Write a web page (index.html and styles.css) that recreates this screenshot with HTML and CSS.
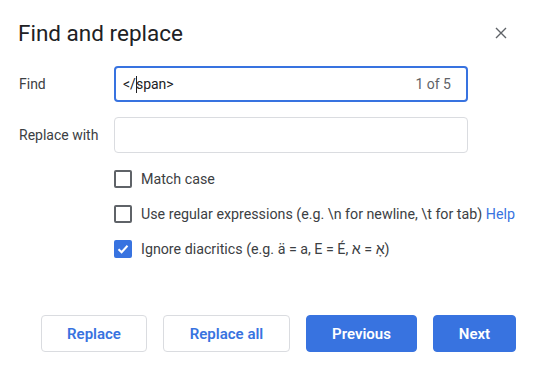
FILE: index.html
```html
<!DOCTYPE html>
<html lang="en">
<head>
    <meta charset="UTF-8">
    <meta name="viewport" content="width=device-width, initial-scale=1.0">
    <title>Find and replace</title>
    <link rel="stylesheet" href="styles.css">
</head>
<body>
    <div class="dialog">
        <div class="dialog-header">
            <h1>Find and replace</h1>
            <button class="close-btn" aria-label="Close">
                <svg width="12" height="12" viewBox="0 0 12 12">
                    <path d="M1 1 L11 11 M11 1 L1 11" stroke="#5f6368" stroke-width="1.4" fill="none"/>
                </svg>
            </button>
        </div>

        <div class="form-grid">
            <label class="field-label">Find</label>
            <div class="text-field focused">
                <span class="field-value">&lt;/<span class="caret"></span>span&gt;</span>
                <span class="match-count">1 of 5</span>
            </div>

            <label class="field-label">Replace with</label>
            <div class="text-field"></div>
        </div>

        <div class="options">
            <label class="option">
                <span class="checkbox"></span>
                <span>Match case</span>
            </label>
            <label class="option">
                <span class="checkbox"></span>
                <span>Use regular expressions (e.g. \n for newline, \t for tab) <a class="help-link" href="#">Help</a></span>
            </label>
            <label class="option">
                <span class="checkbox checked">
                    <svg width="14" height="14" viewBox="0 0 14 14">
                        <path d="M2.5 7.2 L5.6 10.2 L11.5 3.8" stroke="#fff" stroke-width="2" fill="none"/>
                    </svg>
                </span>
                <span>Ignore diacritics (e.g. ä = a, E = É, <bdi>א</bdi> = <bdi>אָ</bdi>)</span>
            </label>
        </div>

        <div class="actions">
            <button class="btn outline-btn">Replace</button>
            <button class="btn outline-btn">Replace all</button>
            <button class="btn primary-btn">Previous</button>
            <button class="btn primary-btn">Next</button>
        </div>
    </div>
</body>
</html>
```

FILE: styles.css
```css
body {
    margin: 0;
    background-color: #fff;
    font-family: Roboto, 'Noto Sans', Arial, sans-serif;
    color: #3c4043;
}

.dialog {
    width: 540px;
    height: 372px;
    box-sizing: border-box;
    padding: 19px 24px 0 18px;
}

.dialog-header {
    display: flex;
    justify-content: space-between;
    align-items: center;
    height: 28px;
}

h1 {
    margin: 0;
    font-size: 22.5px;
    font-weight: 400;
    line-height: 28px;
    color: #202124;
}

.close-btn {
    border: none;
    background: none;
    padding: 0;
    width: 12px;
    height: 12px;
    margin-right: 9px;
    cursor: pointer;
    display: flex;
}

.form-grid {
    display: grid;
    grid-template-columns: 96px 354px;
    row-gap: 15px;
    align-items: center;
    margin-top: 19px;
}

.field-label {
    font-size: 14px;
    padding-left: 1px;
}

.text-field {
    height: 36px;
    box-sizing: border-box;
    border: 1px solid #dadce0;
    border-radius: 4px;
    display: flex;
    align-items: center;
    justify-content: space-between;
    padding: 0 16px 0 8px;
    font-size: 14px;
}

.text-field.focused {
    border: 2px solid #3873e0;
    padding: 0 15px 0 7px;
}

.field-value {
    color: #202124;
}

.caret {
    display: inline-block;
    width: 1px;
    height: 17px;
    background-color: #202124;
    vertical-align: -4px;
    margin-right: -1px;
}

.match-count {
    color: #5f6368;
}

.options {
    display: flex;
    flex-direction: column;
    gap: 11px;
    margin: 14px 0 0 96px;
}

.option {
    display: flex;
    align-items: center;
    height: 24px;
    font-size: 14.25px;
    white-space: nowrap;
}

.checkbox {
    width: 18px;
    height: 18px;
    flex-shrink: 0;
    box-sizing: border-box;
    border: 2px solid #5f6368;
    border-radius: 2px;
    margin-right: 9px;
    display: flex;
    align-items: center;
    justify-content: center;
}

.checkbox.checked {
    background-color: #3873e0;
    border-color: #3873e0;
}

.help-link {
    color: #3873e0;
    text-decoration: none;
}

.actions {
    display: flex;
    justify-content: flex-end;
    gap: 16px;
    margin-top: 54px;
}

.btn {
    height: 37px;
    border-radius: 4px;
    font-family: Roboto, 'Noto Sans', Arial, sans-serif;
    font-size: 15px;
    font-weight: 600;
    cursor: pointer;
    padding: 0;
}

.outline-btn {
    background-color: #fff;
    border: 1px solid #dadce0;
    color: #3873e0;
}

.primary-btn {
    background-color: #3873e0;
    border: 1px solid #3873e0;
    color: #fff;
}

.actions .btn:nth-child(1) { width: 106px; }
.actions .btn:nth-child(2) { width: 127px; }
.actions .btn:nth-child(3) { width: 111px; }
.actions .btn:nth-child(4) { width: 83px; }
```
